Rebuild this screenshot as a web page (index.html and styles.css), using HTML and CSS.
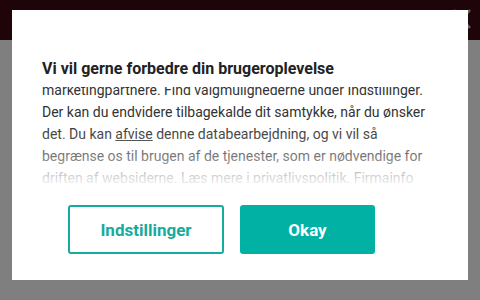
FILE: index.html
```html
<!DOCTYPE html>
<html lang="da">
<head>
<meta charset="utf-8">
<link rel="stylesheet" href="styles.css">
</head>
<body>
<div class="page">
  <header class="topbar">
    <svg class="close-x" width="20" height="22" viewBox="0 0 20 22"><path d="M2 2 L18 20 M18 2 L2 20" stroke="#6b6466" stroke-width="2.5" fill="none"/></svg>
  </header>
  <div class="rest"></div>
</div>
<div class="modal">
  <h2 class="title">Vi vil gerne forbedre din brugeroplevelse</h2>
  <div class="scroll">
    <p class="text">marketingpartnere. Find valgmulighederne under Indstillinger. Der kan du endvidere tilbagekalde dit samtykke, når du ønsker det. Du kan <a class="link" href="#">afvise</a> denne databearbejdning, og vi vil så begrænse os til brugen af de tjenester, som er nødvendige for driften af websiderne. Læs mere i privatlivspolitik. Firmainfo</p>
    <div class="fade"></div>
  </div>
  <div class="actions">
    <button class="btn btn-outline">Indstillinger</button>
    <button class="btn btn-fill">Okay</button>
  </div>
</div>
</body>
</html>
```
FILE: styles.css
```css
html, body { margin: 0; padding: 0; }
body {
  width: 480px;
  height: 300px;
  overflow: hidden;
  font-family: Roboto, "Liberation Sans", sans-serif;
  background: #7f7f7f;
}
.page { display: flex; flex-direction: column; height: 300px; }
.topbar {
  height: 40px;
  background: #1f0509;
  display: flex;
  justify-content: flex-end;
  align-items: flex-start;
  padding: 8px 8px 0 0;
  box-sizing: border-box;
}
.close-x { display: block; }
.rest { flex: 1; }
.modal {
  position: absolute;
  left: 12px;
  top: 10px;
  width: 456px;
  height: 270px;
  background: #fff;
  box-sizing: border-box;
  padding: 49px 30px 0 30px;
  display: flex;
  flex-direction: column;
}
.title {
  margin: 0;
  font-size: 16px;
  line-height: 20px;
  font-weight: 700;
  color: #222;
}
.scroll {
  position: relative;
  height: 96px;
  margin-top: 8px;
  overflow: hidden;
}
.text {
  margin: -8px 0 0 0;
  font-size: 14px;
  line-height: 22px;
  color: #333;
}
.link { color: #333; text-decoration: underline; }
.fade {
  position: absolute;
  left: 0; right: 0; bottom: 0;
  height: 58px;
  background: linear-gradient(to bottom, rgba(255,255,255,0) 0%, rgba(255,255,255,0.35) 55%, rgba(255,255,255,0.8) 90%, rgba(255,255,255,0.9) 100%);
}
.actions {
  display: flex;
  gap: 16px;
  padding-left: 26px;
  margin-top: 22px;
}
.btn {
  height: 49px;
  font-family: Roboto, "Liberation Sans", sans-serif;
  font-size: 17px;
  font-weight: 700;
  border-radius: 3px;
  box-sizing: border-box;
}
.btn-outline {
  width: 156px;
  background: #fff;
  color: #17aba0;
  border: 2px solid #17aba0;
}
.btn-fill {
  width: 135px;
  background: #00b1a4;
  color: #fff;
  border: 0;
}
```
